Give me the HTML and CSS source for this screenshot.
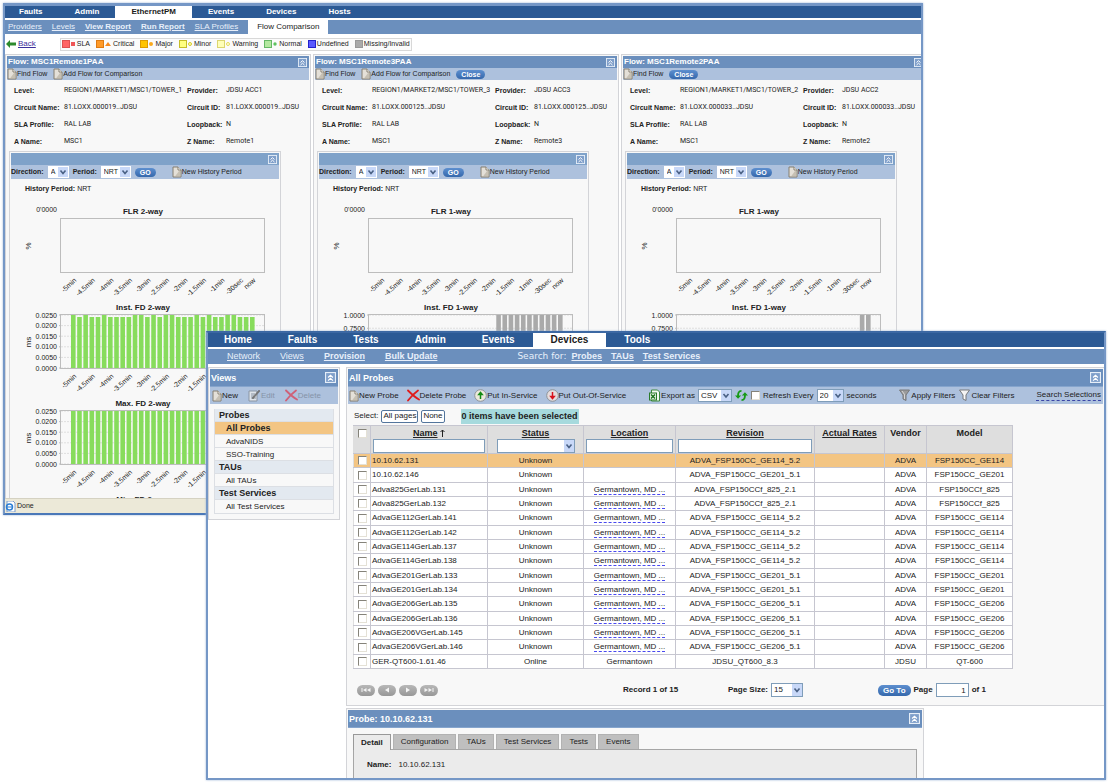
FILE: index.html
```html
<!DOCTYPE html>
<html lang="en">
<head>
    <meta charset="UTF-8">
    <meta name="viewport" content="width=device-width, initial-scale=1.0">
    <title>EthernetPM - Devices</title>
    <link rel="stylesheet" href="styles.css">
</head>
<body>
    <!-- Shared icons -->
    <svg class="sprite" aria-hidden="true">
        <symbol id="i-page" viewBox="0 0 10 12">
            <path d="M1 1h5l3 3v7H1z" fill="#e4e0d8" stroke="#857e70"/>
            <path d="M6 1v3h3" fill="#fff" stroke="#857e70"/>
            <path d="M7 5h1.500v5.500H3z" fill="#b9b2a4" opacity=".7"/>
        </symbol>
        <symbol id="i-up" viewBox="0 0 10 10">
            <rect x=".5" y=".5" width="9" height="9" fill="#7f9fca" stroke="#e6eef8"/>
            <path d="M2.800 5 5 3l2.200 2M2.800 7.800 5 5.800l2.200 2" fill="none" stroke="#fff" stroke-width="1.100"/>
        </symbol>
        <symbol id="i-edit" viewBox="0 0 13 13">
            <path d="M1 2h8v10H1z" fill="#dfe4ea" stroke="#8a95a3"/>
            <path d="M3 5h4M3 7h3M3 9h5" stroke="#8a95a3"/>
            <path d="M4 9 11 1l1 1-7 8z" fill="#777" stroke="#666" stroke-width=".5"/>
        </symbol>
        <symbol id="i-x" viewBox="0 0 13 12">
            <path d="M1 1c3 3 7 7 11 9M11 1C7 4 4 7 1 11" fill="none" stroke="currentColor" stroke-width="1.800" stroke-linecap="round"/>
        </symbol>
        <symbol id="i-in" viewBox="0 0 13 13">
            <circle cx="6.500" cy="6.500" r="5.800" fill="#ece9dc" stroke="#8e9499"/>
            <path d="M6.500 10V5M4.800 5.500l1.700-2 1.700 2z" stroke="#128a12" stroke-width="1.500" fill="#128a12"/>
        </symbol>
        <symbol id="i-out" viewBox="0 0 13 13">
            <circle cx="6.500" cy="6.500" r="5.800" fill="#e6dcdc" stroke="#8e9499"/>
            <path d="M6.500 3v5M4.800 7.500l1.700 2 1.700-2z" stroke="#d8131b" stroke-width="1.500" fill="#d8131b"/>
        </symbol>
        <symbol id="i-excel" viewBox="0 0 12 13">
            <path d="M3 1h6l2 2v9H3z" fill="#f4faf2" stroke="#3c8a3c"/>
            <rect x="1" y="4" width="7" height="7" fill="#e2f2df" stroke="#2a7a2a"/>
            <path d="M2.500 5.500l4 4M6.500 5.500l-4 4" stroke="#187018" stroke-width="1.300"/>
        </symbol>
        <symbol id="i-refresh" viewBox="0 0 14 13">
            <path d="M7 1.500C4 1.500 3.200 4 3.300 7M7 11.500c3 0 3.900-2.500 3.700-5.500" fill="none" stroke="#169a16" stroke-width="2"/>
            <path d="M0 6.500h6.600L3.300 10zM7.400 6.500H14L10.700 3z" fill="#169a16"/>
        </symbol>
        <symbol id="i-filter" viewBox="0 0 12 13">
            <path d="M1 1h10L7.500 6v5.500l-3-1.500V6z" fill="currentColor" stroke="#77797c"/>
            <path d="M3.500 2 6 5.500V10" fill="none" stroke="#fff" opacity=".6"/>
        </symbol>
        <symbol id="i-caret" viewBox="0 0 10 10">
            <path d="M2.500 3.500 5 6.500l2.500-3" fill="none" stroke="#4a6185" stroke-width="1.600"/>
        </symbol>
        <symbol id="i-first" viewBox="0 0 10 6"><path d="M.5 1v4h1V1zM5.500 1v4L2 3zM9.500 1v4L6 3z"/></symbol>
        <symbol id="i-prev" viewBox="0 0 10 6"><path d="M7 .5v5L3 3z"/></symbol>
        <symbol id="i-next" viewBox="0 0 10 6"><path d="M3 .5v5L7 3z"/></symbol>
        <symbol id="i-last" viewBox="0 0 10 6"><path d="M9.500 1v4h-1V1zM4.500 1v4L8 3zM.5 1v4L4 3z"/></symbol>
    </svg>

    <!-- Flow comparison window -->
    <section class="window window-flow">
        <nav class="tabs">
            <a href="#">Faults</a>
            <a href="#">Admin</a>
            <a href="#" class="active">EthernetPM</a>
            <a href="#">Events</a>
            <a href="#">Devices</a>
            <a href="#">Hosts</a>
        </nav>
        <nav class="subnav">
            <a href="#">Providers</a>
            <a href="#">Levels</a>
            <a href="#" class="strong">View Report</a>
            <a href="#" class="strong">Run Report</a>
            <a href="#">SLA Profiles</a>
            <a href="#" class="current">Flow Comparison</a>
        </nav>
        <div class="legend-row">
            <a href="#" class="back">
                <svg width="10" height="8" viewBox="0 0 10 8"><path d="M0 4 4 0v2.500h6v3H4V8z" fill="#2c8a2c"/></svg>Back
            </a>
            <ul class="legend">
                <li><i class="swatch sla"></i><svg width="5" height="5"><path d="M0 0h4v4H0z" fill="#ee5555"/></svg>SLA</li>
                <li><i class="swatch critical"></i><svg width="7" height="5"><path d="M0 4 3 0l3 4z" fill="#f58a1f"/></svg>Critical</li>
                <li><i class="swatch major"></i><svg width="5" height="5"><circle cx="2" cy="2" r="2" fill="#fba91c"/></svg>Major</li>
                <li><i class="swatch minor"></i><svg width="5" height="5"><circle cx="2" cy="2" r="1.500" fill="#ffffb0" stroke="#d6cb2c"/></svg>Minor</li>
                <li><i class="swatch warning"></i><svg width="5" height="5"><circle cx="2" cy="2" r="1.500" fill="#ffffe0" stroke="#e4dc5c"/></svg>Warning</li>
                <li><i class="swatch normal"></i><svg width="5" height="5"><circle cx="2" cy="2" r="1.700" fill="#5fc25f"/></svg>Normal</li>
                <li><i class="swatch undefined"></i>Undefined</li>
                <li><i class="swatch missing"></i>Missing/Invalid</li>
            </ul>
        </div>
        <div class="flows" id="flows"></div>
        <footer class="status">
            <svg width="11" height="11" viewBox="0 0 11 11"><path d="M2 0h6l2 2v9H2z" fill="#fff" stroke="#7c9cc8"/><circle cx="4.500" cy="6" r="3" fill="none" stroke="#2c7fd6" stroke-width="1.500"/><path d="M2 6h5" stroke="#2c7fd6"/></svg>
            Done
        </footer>
    </section>

    <!-- Devices window -->
    <section class="window window-devices">
        <nav class="tabs">
            <a href="#">Home</a>
            <a href="#">Faults</a>
            <a href="#">Tests</a>
            <a href="#">Admin</a>
            <a href="#">Events</a>
            <a href="#" class="active">Devices</a>
            <a href="#">Tools</a>
        </nav>
        <nav class="subnav">
            <a href="#">Network</a>
            <a href="#">Views</a>
            <a href="#" class="strong">Provision</a>
            <a href="#" class="strong">Bulk Update</a>
            <div class="search">
                <span>Search for:</span>
                <a href="#" class="strong">Probes</a>
                <a href="#" class="strong">TAUs</a>
                <a href="#" class="strong">Test Services</a>
            </div>
        </nav>

        <div class="workspace">
            <aside class="panel views">
                <header class="title"><h2>Views</h2><button class="collapse" aria-label="Collapse"><svg><use href="#i-up"/></svg></button></header>
                <div class="toolbar">
                    <button class="tool"><svg class="page"><use href="#i-page"/></svg>New</button>
                    <button class="tool" disabled><svg><use href="#i-edit"/></svg>Edit</button>
                    <button class="tool del" disabled><svg><use href="#i-x"/></svg>Delete</button>
                </div>
                <ul class="tree">
                    <li class="group">Probes</li>
                    <li class="selected"><a href="#">All Probes</a></li>
                    <li><a href="#">AdvaNIDS</a></li>
                    <li><a href="#">SSO-Training</a></li>
                    <li class="group">TAUs</li>
                    <li><a href="#">All TAUs</a></li>
                    <li class="group">Test Services</li>
                    <li><a href="#">All Test Services</a></li>
                </ul>
            </aside>

            <main class="main">
                <section class="panel probes">
                    <header class="title"><h2>All Probes</h2><button class="collapse" aria-label="Collapse"><svg><use href="#i-up"/></svg></button></header>
                    <div class="toolbar">
                        <div class="tools">
                            <button class="tool"><svg class="page"><use href="#i-page"/></svg>New Probe</button>
                            <button class="tool del"><svg><use href="#i-x"/></svg>Delete Probe</button>
                            <button class="tool"><svg><use href="#i-in"/></svg>Put In-Service</button>
                            <button class="tool"><svg><use href="#i-out"/></svg>Put Out-Of-Service</button>
                        </div>
                        <div class="export">
                            <label class="tool" for="export"><svg><use href="#i-excel"/></svg>Export as</label>
                            <span class="select"><select id="export"><option>CSV</option></select><svg><use href="#i-caret"/></svg></span>
                            <button class="tool" aria-label="Refresh"><svg><use href="#i-refresh"/></svg></button>
                            <input type="checkbox" id="auto"><label for="auto">Refresh Every</label>
                            <span class="select short"><select aria-label="Interval"><option>20</option></select><svg><use href="#i-caret"/></svg></span>
                            <span>seconds</span>
                        </div>
                        <div class="filters">
                            <button class="tool apply"><svg><use href="#i-filter"/></svg>Apply Filters</button>
                            <button class="tool clear"><svg><use href="#i-filter"/></svg>Clear Filters</button>
                        </div>
                        <a href="#" class="dashed">Search Selections</a>
                    </div>
                    <div class="selection">
                        <span>Select:</span>
                        <button>All pages</button>
                        <button>None</button>
                        <strong>0 items have been selected</strong>
                    </div>
                    <table>
                        <colgroup>
                            <col class="c-check"><col class="c-name"><col class="c-status"><col class="c-location">
                            <col class="c-revision"><col class="c-rates"><col class="c-vendor"><col class="c-model">
                        </colgroup>
                        <thead>
                            <tr>
                                <th><input type="checkbox" aria-label="Select all"></th>
                                <th><a href="#">Name</a> <svg class="sort" viewBox="0 0 5 8"><path d="M2.500 8V1M.5 3l2-2 2 2"/></svg><input type="text" aria-label="Name filter"></th>
                                <th><a href="#">Status</a><span class="select"><select aria-label="Status filter"><option></option></select><svg><use href="#i-caret"/></svg></span></th>
                                <th><a href="#">Location</a><input type="text" aria-label="Location filter"></th>
                                <th><a href="#">Revision</a><input type="text" aria-label="Revision filter"></th>
                                <th><a href="#">Actual Rates</a></th>
                                <th>Vendor</th>
                                <th>Model</th>
                            </tr>
                        </thead>
                        <tbody id="probes"></tbody>
                    </table>
                    <div class="pager">
                        <div class="pages">
                            <button aria-label="First"><svg><use href="#i-first"/></svg></button>
                            <button aria-label="Previous"><svg><use href="#i-prev"/></svg></button>
                            <button aria-label="Next"><svg><use href="#i-next"/></svg></button>
                            <button aria-label="Last"><svg><use href="#i-last"/></svg></button>
                        </div>
                        <span>Record 1 of 15</span>
                        <div class="field">
                            <label for="size">Page Size:</label>
                            <span class="select"><select id="size"><option>15</option></select><svg><use href="#i-caret"/></svg></span>
                        </div>
                        <div class="field">
                            <button class="pill">Go To</button>
                            <label for="page">Page</label>
                            <input type="text" id="page" value="1">
                            <span>of 1</span>
                        </div>
                    </div>
                </section>

                <section class="panel detail">
                    <header class="title"><h2>Probe: 10.10.62.131</h2><button class="collapse" aria-label="Collapse"><svg><use href="#i-up"/></svg></button></header>
                    <div class="detail-tabs">
                        <button class="on">Detail</button>
                        <button>Configuration</button>
                        <button>TAUs</button>
                        <button>Test Services</button>
                        <button>Tests</button>
                        <button>Events</button>
                    </div>
                    <div class="detail-body"><b>Name:</b><span>10.10.62.131</span></div>
                </section>
            </main>
        </div>
    </section>

    <script src="script.js"></script>
</body>
</html>
```
FILE: styles.css
```css
:root {
    --nav: #2c5a95;
    --bar: #6b8fbd;
    --tool: #adc1dd;
    --frame: #d3d4d8;
    --pane: #f8f8f8;
    --highlight: #f3c583;
    --field: #7f9db9;
}

* {
    margin: 0;
    padding: 0;
    box-sizing: border-box;
}

body {
    height: 100vh;
    overflow: hidden;
    position: relative;
    background: #fff;
    color: #222;
    font-family: "Liberation Sans", Arial, sans-serif;
    font-size: 8px;
    line-height: 10px;
}

button, input, select {
    font: inherit;
    color: inherit;
    border: none;
    background: none;
}

ul {
    list-style: none;
}

a {
    color: inherit;
}

h2 {
    font-size: inherit;
}

.sprite {
    position: absolute;
    width: 0;
    height: 0;
}

/* Windows */
.window {
    position: absolute;
    display: flex;
    flex-direction: column;
    overflow: hidden;
    background: #fff;
    border: 2px solid #7597c6;
}

.window-flow {
    top: 3px;
    left: 3px;
    right: 185px;
    bottom: 267px;
    border-top-width: 3px;
    border-bottom-color: #4a78b8;
    box-shadow: 0 0 2px #9db4d6;
}

.window-devices {
    top: 331px;
    left: 206px;
    right: 2px;
    bottom: 2px;
    border-top-color: #3c68a3;
    box-shadow: 0 0 2px #9db4d6;
}

.tabs {
    flex: none;
    display: flex;
    height: 12px;
    line-height: 12px;
    background: var(--nav);
    color: #fff;
    font-weight: bold;
}

.tabs a {
    padding: 0 16px;
    text-decoration: none;
}

.tabs a:first-child {
    padding-left: 14px;
}

.tabs .active {
    background: #fff;
    color: #1b1b1b;
}

.subnav {
    flex: none;
    display: flex;
    gap: 10px;
    height: 14px;
    line-height: 13px;
    margin-top: 2px;
    padding-left: 3px;
    background: var(--bar);
    color: #e8effa;
}

.strong {
    font-weight: bold;
}

.subnav .current {
    padding: 0 9px;
    background: #fff;
    color: #222;
    text-decoration: none;
}

/* Panels */
.panel {
    border: 1px solid var(--frame);
    padding: 1px;
    background: var(--pane);
}

.title {
    display: flex;
    align-items: center;
    justify-content: space-between;
    height: 12px;
    padding: 0 2px 0 1px;
    background: var(--bar);
    color: #fff;
}

.collapse svg {
    display: block;
    width: 9px;
    height: 9px;
}

.toolbar {
    display: flex;
    align-items: center;
    height: 12px;
    gap: 6px;
    background: var(--tool);
}

.tool {
    display: flex;
    align-items: center;
}

.tool svg {
    width: 13px;
    height: 13px;
}

.tool .page {
    width: 10px;
    height: 12px;
}

.tool:disabled {
    color: #8593a8;
}

.tool.del svg {
    color: #e01b1b;
}

.tool.del:disabled svg {
    color: #cf6077;
}

.pill {
    height: 9px;
    line-height: 9px;
    padding: 0 5px;
    border-radius: 5px;
    background: linear-gradient(#5d8fcf, #3568ac);
    color: #fff;
    font-weight: bold;
}

.select {
    position: relative;
    display: inline-block;
}

.select select {
    display: block;
    width: 100%;
    height: 100%;
    padding-left: 2px;
    appearance: none;
    background: #fff;
    border: 1px solid var(--field);
}

.select svg {
    position: absolute;
    top: 1px;
    right: 1px;
    width: 10px;
    height: calc(100% - 2px);
    background: #c8d8f8;
    pointer-events: none;
}

/* Flow window */
.legend-row {
    flex: none;
    display: flex;
    align-items: center;
    gap: 24px;
    height: 20px;
}

.back {
    display: flex;
    align-items: center;
    gap: 2px;
    padding-left: 1px;
    color: #3a2f9c;
}

.legend {
    display: flex;
    align-items: center;
    gap: 6px;
    height: 13px;
    padding: 0 1px;
    border: 1px solid #d8d8d8;
    background: #fbfbfb;
    font-size: 7px;
}

.legend li {
    display: flex;
    align-items: center;
    gap: 1px;
}

.swatch {
    width: 8px;
    height: 8px;
    border: 1px solid;
}

.sla { background: #ff6464; border-color: #dd5050; }
.critical { background: #ff9a28; border-color: #de7a12; }
.major { background: #ffc400; border-color: #de9c00; }
.minor { background: #ffff80; border-color: #c6be28; }
.warning { background: #ffffb8; border-color: #dcd670; }
.normal { background: #b4e8a0; border-color: #66b866; }
.undefined { background: #5a5aff; border-color: #2222cc; }
.missing { background: #aaa; border-color: #999; }

.flows {
    flex: 1;
    min-height: 0;
    overflow: hidden;
    display: grid;
    grid-template-columns: repeat(3, 1fr);
    gap: 2px;
    margin-right: -6px;
    font-size: 7px;
}

.flows h2 {
    font-size: 8px;
}

.flow {
    border-bottom: none;
}

.flow .select {
    width: 21px;
    height: 12px;
}

.flow .select.wide {
    width: 30px;
}

.flow .select select {
    border-color: #fff;
}

.facts {
    display: grid;
    grid-template-columns: 50px 123px 39px 1fr;
    line-height: 17px;
    padding: 2px 0 1px 7px;
    white-space: nowrap;
}

.facts dt {
    font-weight: bold;
}

.facts dd {
    font-family: Roboto, "Liberation Sans", sans-serif;
}

.history {
    margin: 0 28px 0 2px;
}

.history .title {
    background: #7fa2c9;
}

.history .toolbar {
    height: 14px;
    gap: 4px;
}

.history .toolbar .tool {
    margin-left: 12px;
}

.history p {
    padding: 5px 0 9px 14px;
}

.chart {
    display: block;
    width: 100%;
    height: 96px;
    overflow: visible;
}

.chart text {
    font-size: 7px;
    fill: #222;
}

.chart .name {
    font-size: 8px;
    font-weight: bold;
    text-anchor: middle;
}

.chart .unit {
    font-size: 8px;
    text-anchor: middle;
}

.chart .tick {
    text-anchor: end;
}

.chart .plot {
    fill: none;
    stroke: #bdbdbd;
}

.chart .grid {
    stroke: #dedede;
    stroke-dasharray: 2 1;
}

.status {
    flex: none;
    position: relative;
    display: flex;
    align-items: center;
    gap: 1px;
    height: 15px;
    background: #ece9d8;
    border-top: 1px solid #d5d2c2;
    font-size: 7px;
}

/* Devices window */
.window-devices .tabs {
    height: 14px;
    line-height: 14px;
    font-size: 10px;
}

.window-devices .tabs a {
    padding: 0 18px;
}

.window-devices .tabs a:first-child {
    padding-left: 16px;
}

.window-devices .subnav {
    gap: 20px;
    height: 15px;
    line-height: 15px;
    padding-left: 19px;
    font-size: 9px;
}

.search {
    display: flex;
    gap: 9px;
    margin-left: 60px;
}

.search span {
    margin-right: -4px;
    font-family: "DejaVu Sans", sans-serif;
}

.workspace {
    display: flex;
    align-items: flex-start;
    gap: 6px;
    padding-top: 3px;
}

.window-devices .title {
    height: 18px;
    border-bottom: 1px solid #86a5cd;
    font-size: 9px;
    padding-right: 2px;
}

.window-devices .collapse svg {
    width: 11px;
    height: 11px;
}

.window-devices .toolbar {
    height: 17px;
}

.views {
    flex: none;
    width: 132px;
    padding-bottom: 5px;
}

.views .toolbar {
    gap: 10px;
    padding-left: 2px;
}

.tree {
    margin: 5px 4px 0;
    border: 1px solid #dcdfe4;
    border-top: none;
}

.tree li {
    height: 13px;
    line-height: 13px;
    padding-left: 11px;
    border-bottom: 1px solid #dcdfe4;
}

.tree li:last-child {
    border-bottom: none;
}

.tree a {
    text-decoration: none;
}

.tree .group {
    padding-left: 4px;
    background: #e3e9f0;
    font-size: 9px;
    font-weight: bold;
}

.tree .selected {
    background: var(--highlight);
    font-size: 9px;
    font-weight: bold;
}

.main {
    flex: 1;
    min-width: 0;
}

.probes {
    padding-bottom: 2px;
    border-right: none;
}

.probes .toolbar {
    justify-content: space-between;
    padding: 0 2px 0 1px;
    white-space: nowrap;
}

.tools {
    display: flex;
    gap: 8px;
}

.export, .filters {
    display: flex;
    align-items: center;
    gap: 3px;
}

.probes .toolbar .select {
    width: 34px;
    height: 13px;
}

.probes .toolbar .short {
    width: 27px;
}

.apply svg {
    color: #9b9b9b;
}

.clear svg {
    color: #f2f2f2;
}

.dashed {
    text-decoration: none;
    border-bottom: 1px dashed #3b46a8;
}

.selection {
    display: flex;
    align-items: center;
    gap: 3px;
    height: 21px;
    padding: 3px 0 0 6px;
    font-size: 9px;
}

.selection span {
    font-size: 8px;
}

.selection button {
    height: 13px;
    padding: 0 1px;
    border: 1px solid #53759c;
    border-radius: 2px;
    background: #fff;
    font-size: 8px;
}

.selection strong {
    height: 15px;
    line-height: 15px;
    margin-left: 13px;
    padding: 0 1px;
    background: #a6dadd;
}

table {
    width: calc(100% - 95px);
    height: 244px;
    margin-left: 5px;
    table-layout: fixed;
    border-collapse: collapse;
    background: #fff;
    text-align: center;
}

.c-check { width: 17px; }
.c-name { width: 117px; }
.c-status { width: 96px; }
.c-location { width: 92px; }
.c-revision { width: 139px; }
.c-rates { width: 70px; }
.c-vendor { width: 42px; }
.c-model { width: 86px; }

th, td {
    border: 1px solid #c6c6d0;
    white-space: nowrap;
}

th {
    height: 28px;
    padding: 2px 2px 0;
    vertical-align: top;
    background: #dedede;
    font-size: 9px;
}

th input[type="text"], th .select {
    display: block;
    width: 100%;
    height: 14px;
    margin-top: 1px;
    background: #fff;
}

th .select {
    width: 78px;
    margin: 1px auto 0;
}

th input[type="text"], .field input {
    border: 1px solid var(--field);
}

.sort {
    width: 5px;
    height: 8px;
    fill: none;
    stroke: #222;
    vertical-align: -1px;
}

td {
    height: 14px;
    line-height: 9px;
}

td:nth-child(2) {
    padding-left: 1px;
    text-align: left;
}

td:first-child, th:first-child {
    border-left-color: #dedede;
}

td a {
    text-decoration: none;
    border-bottom: 1px dashed #4a4af0;
}

tr.selected {
    background: var(--highlight);
}

input[type="checkbox"] {
    appearance: none;
    display: inline-block;
    width: 9px;
    height: 9px;
    vertical-align: middle;
    background: #fff;
    border: 1px solid #e4e1d6;
    border-top-color: #85837a;
    border-left-color: #85837a;
}

.pager {
    display: grid;
    grid-template-columns: 266px 105px 150px auto;
    align-items: center;
    height: 26px;
    margin: 8px 0 0 9px;
    font-weight: bold;
}

.pages, .field {
    display: flex;
    align-items: center;
    gap: 3px;
}

.pages button {
    display: flex;
    align-items: center;
    justify-content: center;
    width: 18px;
    height: 11px;
    border-radius: 6px;
    background: linear-gradient(#b8b8b8, #979797);
}

.pages svg {
    width: 10px;
    height: 6px;
    fill: #f4f4f4;
}

.field .select {
    width: 32px;
    height: 14px;
    font-weight: normal;
}

.field .pill {
    height: 11px;
    line-height: 11px;
}

.field input {
    width: 33px;
    height: 14px;
    padding-right: 2px;
    background: #fff;
    font-weight: normal;
    text-align: right;
}

.detail {
    height: 120px;
    margin: 2px 180px 0 0;
}

.detail-tabs {
    display: flex;
    gap: 2px;
    margin: 6px 5px 0;
}

.detail-tabs button {
    height: 15px;
    padding: 0 7px;
    background: #bfbfbf;
    border: 1px solid #b2b2b2;
    border-bottom: none;
}

.detail-tabs .on {
    position: relative;
    height: 16px;
    margin-bottom: -1px;
    background: #ebebeb;
    border-color: #999;
    font-weight: bold;
}

.detail-body {
    display: flex;
    gap: 7px;
    height: 90px;
    margin: 0 5px;
    padding: 10px 13px;
    background: #ebebeb;
    border: 1px solid #a6a6a6;
}
```
FILE: script.js
```js
const flows = [
    { name: 'MSC1Remote1PAA', level: 'REGION1/MARKET1/MSC1/TOWER_1', provider: 'JDSU ACC1', circuit: '81.LOXX.000019..JDSU', z: 'Remote1', way: '2-way', add: true, close: false },
    { name: 'MSC1Remote3PAA', level: 'REGION1/MARKET2/MSC1/TOWER_3', provider: 'JDSU ACC3', circuit: '81.LOXX.000125..JDSU', z: 'Remote3', way: '1-way', add: true, close: true, missing: 19 },
    { name: 'MSC1Remote2PAA', level: 'REGION1/MARKET1/MSC1/TOWER_2', provider: 'JDSU ACC2', circuit: '81.LOXX.000033..JDSU', z: 'Remote2', way: '1-way', add: false, close: true, missing: 28 }
];

const times = ['-5min', '-4.5min', '-4min', '-3.5min', '-3min', '-2.5min', '-2min', '-1.5min', '-1min', '-30sec', 'now'];
const samples = 30;

// 1 = full height, 0 = slightly lower sample
const instant = '101001000011010110001010011000'.split('').map(Number);

const fineScale = ['0.0250', '0.0200', '0.0150', '0.0100', '0.0050', '0.0000'];
const unitScale = ['1.0000', '0.7500'];

// Plot area inside a 268x96 chart
const plot = { left: 50, top: 16, width: 203, height: 53 };

function barX(i) {
    return 62 + i * 179 / (samples - 1);
}

function heading(title) {
    return `<text class="name" x="132" y="11">${title}</text>`;
}

function chart(title, unit, scale, step, bars, color) {
    let out = heading(title);
    if (unit) {
        out += `<text class="unit" transform="translate(20 43) rotate(-90)">${unit}</text>`;
    }

    if (scale.length === 1) {
        out += `<text class="tick" x="46" y="9">${scale[0]}</text>`;
    } else {
        scale.forEach((label, i) => {
            const y = plot.top + step * i;
            out += `<path class="grid" d="M${plot.left} ${y}h${plot.width}"/>`;
            out += `<path class="plot" d="M${plot.left - 2} ${y}h2"/>`;
            out += `<text class="tick" x="46" y="${y + 2.5}">${label}</text>`;
        });
    }

    bars.forEach(([i, drop]) => {
        out += `<rect x="${barX(i) - 2}" y="${plot.top + drop}" width="4.600" height="${plot.height - drop}" fill="${color}"/>`;
    });
    out += `<rect class="plot" x="${plot.left - 0.5}" y="${plot.top - 0.5}" width="${plot.width + 1}" height="${plot.height + 1}"/>`;

    if (scale !== unitScale) {
        times.forEach((label, n) => {
            const i = label === 'now' ? samples - 1 : n * 3;
            out += `<text class="tick" transform="translate(${barX(i) + 4} 78) rotate(-42)">${label}</text>`;
        });
    }
    return `<svg class="chart">${out}</svg>`;
}

function charts(flow) {
    const all = [...Array(samples).keys()];
    const flr = chart('FLR ' + flow.way, '%', ["0'0000"], 0, [], '');
    if (flow.missing) {
        const gone = all.filter(i => i >= flow.missing).map(i => [i, 0]);
        return flr + chart('Inst. FD ' + flow.way, '', unitScale, plot.height / 4, gone, '#aaa');
    }
    const step = plot.height / 5;
    return flr
        + chart('Inst. FD ' + flow.way, 'ms', fineScale, step, all.map(i => [i, instant[i] ? 0 : 2]), '#87dc5c')
        + chart('Max. FD ' + flow.way, 'ms', fineScale, step, all.map(i => [i, 0]), '#87dc5c')
        + `<svg class="chart">${heading('Min. FD ' + flow.way)}</svg>`;
}

function icon(id, cls = '') {
    return `<svg class="${cls}"><use href="#${id}"/></svg>`;
}

document.getElementById('flows').innerHTML = flows.map((f, n) => `
    <section class="panel flow">
        <header class="title"><h2>Flow: ${f.name}</h2><button class="collapse" aria-label="Collapse">${icon('i-up')}</button></header>
        <div class="toolbar">
            <button class="tool">${icon('i-page', 'page')}Find Flow</button>
            ${f.add ? `<button class="tool">${icon('i-page', 'page')}Add Flow for Comparison</button>` : ''}
            ${f.close ? '<button class="pill">Close</button>' : ''}
        </div>
        <dl class="facts">
            <dt>Level:</dt><dd>${f.level}</dd><dt>Provider:</dt><dd>${f.provider}</dd>
            <dt>Circuit Name:</dt><dd>${f.circuit}</dd><dt>Circuit ID:</dt><dd>${f.circuit}</dd>
            <dt>SLA Profile:</dt><dd>RAL LAB</dd><dt>Loopback:</dt><dd>N</dd>
            <dt>A Name:</dt><dd>MSC1</dd><dt>Z Name:</dt><dd>${f.z}</dd>
        </dl>
        <div class="panel history">
            <header class="title"><span></span><button class="collapse" aria-label="Collapse">${icon('i-up')}</button></header>
            <div class="toolbar">
                <label class="strong" for="dir${n}">Direction:</label>
                <span class="select"><select id="dir${n}"><option>A</option></select>${icon('i-caret')}</span>
                <label class="strong" for="per${n}">Period:</label>
                <span class="select wide"><select id="per${n}"><option>NRT</option></select>${icon('i-caret')}</span>
                <button class="pill">GO</button>
                <button class="tool">${icon('i-page', 'page')}New History Period</button>
            </div>
            <p><b>History Period:</b> NRT</p>
            ${charts(f)}
        </div>
    </section>`).join('');

// name, status, location, revision, vendor, model
const town = 'Germantown, MD ...';
const probes = [
    ['10.10.62.131', 'Unknown', '', 'ADVA_FSP150CC_GE114_5.2', 'ADVA', 'FSP150CC_GE114'],
    ['10.10.62.146', 'Unknown', '', 'ADVA_FSP150CC_GE201_5.1', 'ADVA', 'FSP150CC_GE201'],
    ['Adva825GerLab.131', 'Unknown', town, 'ADVA_FSP150CCf_825_2.1', 'ADVA', 'FSP150CCf_825'],
    ['Adva825GerLab.132', 'Unknown', town, 'ADVA_FSP150CCf_825_2.1', 'ADVA', 'FSP150CCf_825'],
    ['AdvaGE112GerLab.141', 'Unknown', town, 'ADVA_FSP150CC_GE114_5.2', 'ADVA', 'FSP150CC_GE114'],
    ['AdvaGE112GerLab.142', 'Unknown', town, 'ADVA_FSP150CC_GE114_5.2', 'ADVA', 'FSP150CC_GE114'],
    ['AdvaGE114GerLab.137', 'Unknown', town, 'ADVA_FSP150CC_GE114_5.2', 'ADVA', 'FSP150CC_GE114'],
    ['AdvaGE114GerLab.138', 'Unknown', town, 'ADVA_FSP150CC_GE114_5.2', 'ADVA', 'FSP150CC_GE114'],
    ['AdvaGE201GerLab.133', 'Unknown', town, 'ADVA_FSP150CC_GE201_5.1', 'ADVA', 'FSP150CC_GE201'],
    ['AdvaGE201GerLab.134', 'Unknown', town, 'ADVA_FSP150CC_GE201_5.1', 'ADVA', 'FSP150CC_GE201'],
    ['AdvaGE206GerLab.135', 'Unknown', town, 'ADVA_FSP150CC_GE206_5.1', 'ADVA', 'FSP150CC_GE206'],
    ['AdvaGE206GerLab.136', 'Unknown', town, 'ADVA_FSP150CC_GE206_5.1', 'ADVA', 'FSP150CC_GE206'],
    ['AdvaGE206VGerLab.145', 'Unknown', town, 'ADVA_FSP150CC_GE206_5.1', 'ADVA', 'FSP150CC_GE206'],
    ['AdvaGE206VGerLab.146', 'Unknown', town, 'ADVA_FSP150CC_GE206_5.1', 'ADVA', 'FSP150CC_GE206'],
    ['GER-QT600-1.61.46', 'Online', 'Germantown', 'JDSU_QT600_8.3', 'JDSU', 'QT-600']
];

document.getElementById('probes').innerHTML = probes.map(([name, status, place, rev, vendor, model], i) => `
    <tr class="${i === 0 ? 'selected' : ''}">
        <td><input type="checkbox" aria-label="Select ${name}"></td>
        <td>${name}</td>
        <td>${status}</td>
        <td>${place === town ? `<a href="#">${place}</a>` : place}</td>
        <td>${rev}</td>
        <td></td>
        <td>${vendor}</td>
        <td>${model}</td>
    </tr>`).join('');
```
